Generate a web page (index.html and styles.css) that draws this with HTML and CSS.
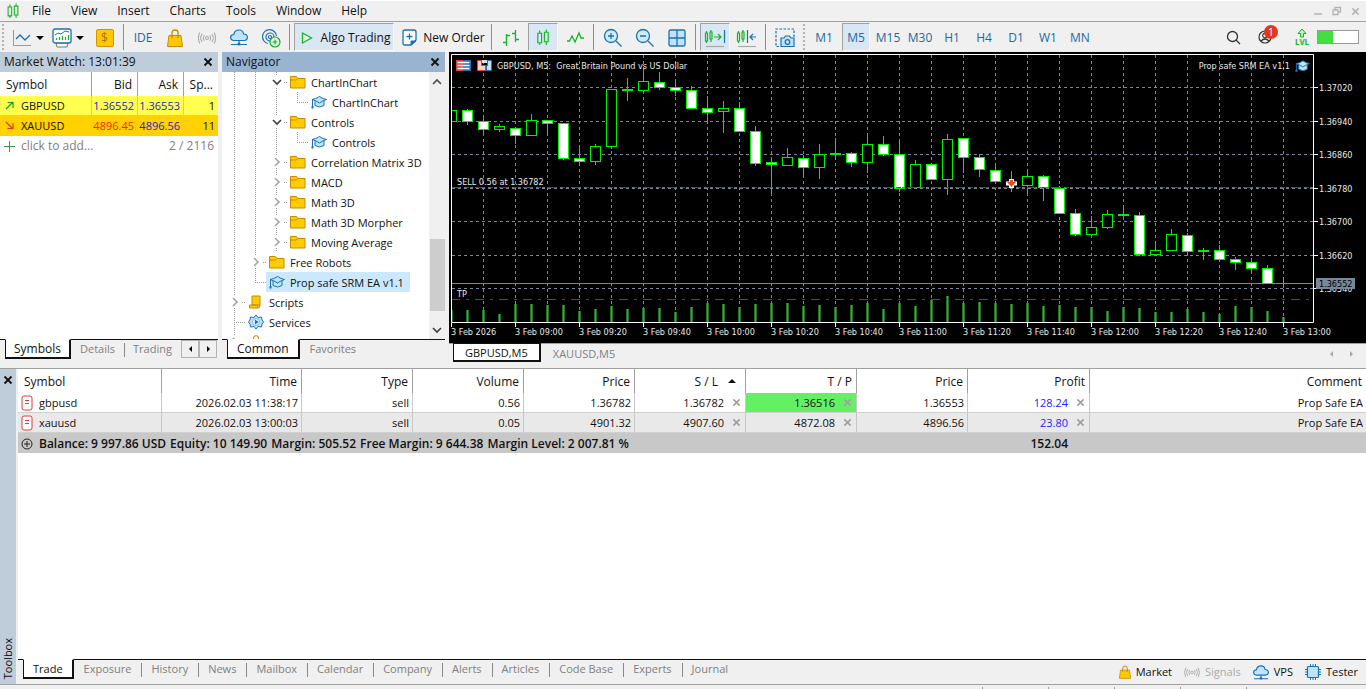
FILE: index.html
```html
<!DOCTYPE html>
<html lang="en">
<head>
<meta charset="utf-8">
<title>Trading Terminal</title>
<link rel="stylesheet" href="styles.css">
</head>
<body>
<svg class="defs" aria-hidden="true">
  <symbol id="i-folder" viewBox="0 0 16 14"><path d="M.5 1.5h6l1.500 2h7v9.500H.5z" fill="#ffcc00" stroke="#c68a00"/><path d="M.5 5h6l1.500-1.500" fill="none" stroke="#c68a00"/></symbol>
  <symbol id="i-cap" viewBox="0 0 16 14"><path d="M4 6v4.500q4.500 3 9 0V6" fill="#bfe3fb" stroke="#1a72b0"/><path d="M1 4.500Q5 4 8.500 1.500 12 4 15.500 4.500 12 5.500 8.500 8 5 5.500 1 4.500z" fill="#bfe3fb" stroke="#1a72b0"/><path d="M1.500 4.500v7" stroke="#1a72b0"/><path d="M.5 11h2v2.500h-2z" fill="#1a72b0"/></symbol>
  <symbol id="i-bag" viewBox="0 0 16 18"><path d="M2 6.500h12l1.500 11H.5z" fill="#ffc800" stroke="#c68a00"/><path d="M5 9V3.500Q5 1 8 1t3 2.500V9" fill="none" stroke="#c68a00" stroke-width="1.300"/></symbol>
  <symbol id="i-signal" viewBox="0 0 20 14"><g fill="none" stroke="currentColor" stroke-width="1.200"><circle cx="10" cy="7" r="1.600"/><path d="M7 4q-2 3 0 6M13 4q2 3 0 6M4.500 2.500q-3 4.500 0 9M15.500 2.500q3 4.500 0 9M2 1q-3 6 0 12M18 1q3 6 0 12"/></g></symbol>
  <symbol id="i-cloud" viewBox="0 0 18 17"><path d="M4 11.500Q.6 11.300.6 8.300.6 5.800 3.800 5.500 4.500 1 9 1q4 0 4.600 4 3.800.2 3.800 3.300 0 3-3.400 3.200z" fill="#bfe3fb" stroke="#1a72b0" stroke-width="1.200"/><path d="M9 11.500V14M1 15.500h16" stroke="#1a72b0" stroke-width="1.200"/><circle cx="9" cy="15" r="1.500" fill="#1a72b0"/></symbol>
  <symbol id="i-candles" viewBox="0 0 14 18"><g fill="none" stroke="currentColor" stroke-width="1.200"><path d="M1.500 4.500h4v10h-4zM3.500 1.500v3M3.500 14.500v2.500M8.500 3.500h4v10h-4zM10.500.5v3M10.500 13.500V17"/></g></symbol>
  <symbol id="i-doc" viewBox="0 0 12 16"><rect x="1" y="1" width="10" height="14" rx="2" fill="#fff" stroke="#e03c3c"/><path d="M4 5.500h4M4 8.500h4" stroke="#e03c3c"/></symbol>
  <symbol id="i-x" viewBox="0 0 10 10"><path d="m1.500 1.500 7 7m0-7-7 7" stroke="currentColor" stroke-width="1.800"/></symbol>
  <symbol id="i-right" viewBox="0 0 10 10"><path d="m3 1 4 4-4 4" fill="none" stroke="#a6a6a6" stroke-width="1.700"/></symbol>
  <symbol id="i-down" viewBox="0 0 10 10"><path d="m1 3 4 4 4-4" fill="none" stroke="#404040" stroke-width="1.700"/></symbol>
</svg>

<nav class="menu" aria-label="Main menu">
  <svg class="app-icon" width="14" height="16"><use href="#i-candles"/></svg>
  <button>File</button><button>View</button><button>Insert</button><button>Charts</button><button>Tools</button><button>Window</button><button>Help</button>
  <div class="window-buttons">
    <button aria-label="Minimize"><svg width="10" height="10"><path d="M1 8h8" stroke="currentColor" stroke-width="1.500"/></svg></button>
    <button aria-label="Restore"><svg width="10" height="10"><path d="M1 4h5v4.500H1zM3 4V1.500h5.500V6H6.500" fill="none" stroke="currentColor" stroke-width="1.300"/></svg></button>
    <button aria-label="Close"><svg width="9" height="9"><use href="#i-x"/></svg></button>
  </div>
</nav>

<header class="toolbar">
  <span class="grip"></span>
  <button class="tool drop" aria-label="Chart type"><svg width="20" height="18" fill="none"><path d="M1.500 1v15.500H19" stroke="#999"/><path d="m4 10 4-4 5 5 5-5" stroke="#1a72b0" stroke-width="1.300"/></svg><i class="caret"></i></button>
  <button class="tool drop" aria-label="Indicators"><svg width="20" height="20" fill="none"><path d="M4 15h12l-1 4H5z" fill="#fff" stroke="#777"/><rect x="1" y="1" width="18" height="14" rx="2" fill="#fff" stroke="#1a72b0" stroke-width="1.300"/><path d="m3 7 3-2 3 1 4-3 4 1" stroke="#1a72b0"/><path d="M4.500 12v-2M7.500 12V9M10.500 12V8M13.500 12V9M16.500 12V7" stroke="#14b428" stroke-width="1.200"/></svg><i class="caret"></i></button>
  <button class="tool coin" aria-label="Quotes"><span>$</span></button>
  <span class="sep"></span>
  <button class="tool blue">IDE</button>
  <button class="tool" aria-label="Market"><svg width="16" height="18"><use href="#i-bag"/></svg></button>
  <button class="tool muted" aria-label="Signals"><svg width="18" height="14"><use href="#i-signal"/></svg></button>
  <button class="tool" aria-label="VPS"><svg width="18" height="17"><use href="#i-cloud"/></svg></button>
  <button class="tool" aria-label="Copy signals"><svg width="20" height="20" fill="none" stroke="#1a72b0" stroke-width="1.200"><circle cx="9" cy="9" r="1.500"/><path d="M9 13a4 4 0 1 1 4-4M7 15.500A7 7 0 1 1 15.500 8"/><circle cx="14" cy="14" r="5" fill="#e6ffe6" stroke="#14a828"/><path d="M11.500 14h5M14 11.500v5" stroke="#14a828"/></svg></button>
  <span class="sep"></span>
  <button class="tool wide on algo"><svg width="12" height="14"><path d="M1.500 2v10l9-5z" fill="#e0f8e0" stroke="#14b428" stroke-width="1.300"/></svg>Algo Trading</button>
  <button class="tool wide order"><svg width="15" height="17"><path d="M3 1h9q2 0 2 2v8l-5 5H3q-2 0-2-2V3q0-2 2-2z" fill="#fff" stroke="#1a72b0" stroke-width="1.300"/><path d="M9 16v-4h5z" fill="#1a72b0" stroke="#1a72b0"/><path d="M4.500 7.500h6M7.500 4.500v6" stroke="#1a72b0" stroke-width="1.300"/></svg>New Order</button>
  <span class="sep"></span>
  <button class="tool green" aria-label="Bar chart"><svg width="18" height="18" fill="none" stroke="currentColor" stroke-width="1.300"><path d="M1 13.500h3M4.500 5v12M4.500 6.500H8M10 4.500h3.500M13.500 1v12M13.500 10.500H17"/></svg></button>
  <button class="tool green on" aria-label="Candlesticks"><svg width="14" height="17"><use href="#i-candles"/></svg></button>
  <button class="tool green" aria-label="Line chart"><svg width="18" height="14" fill="none" stroke="currentColor" stroke-width="1.300"><path d="M1 10h2.500l2.500-5 3 6 4-9 2 5H18"/></svg></button>
  <span class="sep"></span>
  <button class="tool" aria-label="Zoom in"><svg width="20" height="20" fill="none" stroke="#1a72b0" stroke-width="1.300"><circle cx="8" cy="8" r="6.500" fill="#cfeafd"/><path d="m13 13 5.500 5.500M5 8h6M8 5v6"/></svg></button>
  <button class="tool" aria-label="Zoom out"><svg width="20" height="20" fill="none" stroke="#1a72b0" stroke-width="1.300"><circle cx="8" cy="8" r="6.500" fill="#cfeafd"/><path d="m13 13 5.500 5.500M5 8h6"/></svg></button>
  <button class="tool" aria-label="Tile windows"><svg width="18" height="18"><rect x="1" y="1" width="16" height="16" rx="1.500" fill="#bfe3fb" stroke="#1a72b0" stroke-width="1.300"/><path d="M9 1v16M1 9h16" stroke="#1a72b0" stroke-width="1.300"/></svg></button>
  <span class="sep"></span>
  <button class="tool on" aria-label="Auto scroll"><svg width="22" height="20" fill="none" stroke="#14b428" stroke-width="1.200"><path d="M1.500 5h2v8h-2zM2.500 3v2M2.500 13v2M6 4h2v7H6zM7 2v2M7 11v3M10 9h7M14 6l3 3-3 3"/><path d="M20.500 2v13" stroke="#1a72b0"/><path d="M2 18.500h18" stroke="#aaa"/></svg></button>
  <button class="tool" aria-label="Chart shift"><svg width="22" height="20" fill="none" stroke="#14b428" stroke-width="1.200"><path d="M1.500 5h2v8h-2zM2.500 3v2M2.500 13v2M6 4h2v7H6zM7 2v2M7 11v3"/><path d="M11.500 2v13M14 9h6M17 6l-3 3 3 3" stroke="#1a72b0"/><path d="M2 18.500h18" stroke="#aaa"/></svg></button>
  <span class="sep"></span>
  <button class="tool" aria-label="Screenshot"><svg width="20" height="20" fill="none" stroke="#1a72b0" stroke-width="1.200"><path d="M19 9V1H1v17.500h4" stroke-dasharray="2.500 1.500"/><path d="M6 10h3l1.500-2h4L16 10h3v8.500H6z" fill="#bfe3fb"/><circle cx="12.500" cy="14" r="2.300"/></svg></button>
  <span class="grip end"></span>
  <div class="periods" role="group" aria-label="Timeframe">
    <button>M1</button><button class="on">M5</button><button>M15</button><button>M30</button><button>H1</button><button>H4</button><button>D1</button><button>W1</button><button>MN</button>
  </div>
  <div class="toolbar-right">
    <button aria-label="Search"><svg width="15" height="15" fill="none" stroke="#333" stroke-width="1.300"><circle cx="6.500" cy="6.500" r="5"/><path d="m10 10 4 4"/></svg></button>
    <button class="account" aria-label="Notifications"><svg width="16" height="16" fill="none" stroke="#333" stroke-width="1.200"><circle cx="7" cy="8" r="6"/><circle cx="7" cy="6.500" r="2.300"/><path d="M3 12q4-4 8 0"/></svg><span class="badge">1</span></button>
    <span class="level"><svg width="10" height="10"><path d="M3.500 9V5.500H1L5 1l4 4.500H6.500V9z" fill="#b8f5b8" stroke="#14b428"/></svg><b>LVL</b></span>
    <span class="battery"><i></i></span>
  </div>
</header>

<main class="workspace">
  <section class="panel watch">
    <div class="panel-title">Market Watch: 13:01:39<button aria-label="Close Market Watch"><svg width="10" height="10"><use href="#i-x"/></svg></button></div>
    <div class="panel-body">
      <table class="quotes">
        <colgroup><col class="q-symbol"><col class="q-num"><col class="q-num"><col></colgroup>
        <thead><tr><th>Symbol</th><th>Bid</th><th>Ask</th><th>Sp...</th></tr></thead>
        <tbody>
          <tr class="gbp"><td><svg width="9" height="9"><path d="M1 8 8 1M2.500 1.500H8V7" fill="none" stroke="#14a014" stroke-width="1.200"/></svg>GBPUSD</td><td class="up">1.36552</td><td class="up">1.36553</td><td>1</td></tr>
          <tr class="xau"><td><svg width="9" height="9"><path d="m1 1 7 7M2.500 7.500H8V2" fill="none" stroke="#e63c14" stroke-width="1.200"/></svg>XAUUSD</td><td class="down">4896.45</td><td class="up">4896.56</td><td>11</td></tr>
        </tbody>
      </table>
      <div class="add-row"><svg width="11" height="11"><path d="M0 5.500h11M5.500 0v11" stroke="#3c9c4c"/></svg><span>click to add...</span><span>2 / 2116</span></div>
    </div>
    <div class="tabs"><button class="active">Symbols</button><button>Details</button><button class="divided">Trading</button>
      <div class="stepper"><button aria-label="Previous tabs"><i class="tri left"></i></button><button aria-label="Next tabs"><i class="tri right"></i></button></div></div>
  </section>

  <section class="panel navigator">
    <div class="panel-title">Navigator<button aria-label="Close Navigator"><svg width="10" height="10"><use href="#i-x"/></svg></button></div>
    <div class="panel-body nav-body">
      <div class="tree" id="tree"></div>
      <div class="scrollbar"><svg width="10" height="10"><path d="m1 7 4-4 4 4" fill="none" stroke="#505050" stroke-width="1.700"/></svg><span class="thumb"></span><svg width="10" height="10"><use href="#i-down"/></svg></div>
    </div>
    <div class="tabs"><button class="active">Common</button><button>Favorites</button></div>
  </section>

  <section class="chart-area">
    <svg class="chart" id="chart" viewBox="449 52 917 291" role="img" aria-label="GBPUSD M5 candlestick chart"></svg>
    <div class="chart-tabs"><button class="active">GBPUSD,M5</button><button>XAUUSD,M5</button><span class="chart-steps"><i class="tri left"></i><i class="tri right"></i></span></div>
  </section>
</main>

<section class="toolbox">
  <div class="toolbox-side"><button aria-label="Close Toolbox"><svg width="10" height="10"><use href="#i-x"/></svg></button><span>Toolbox</span></div>
  <div class="toolbox-main">
    <div class="toolbox-body">
      <table class="trades">
        <colgroup><col class="c-symbol"><col class="c-time"><col class="c-n"><col class="c-n"><col class="c-n"><col class="c-n"><col class="c-n"><col class="c-n"><col class="c-profit"><col></colgroup>
        <thead><tr><th>Symbol</th><th>Time</th><th>Type</th><th>Volume</th><th>Price</th><th class="sorted">S / L<i></i></th><th>T / P</th><th>Price</th><th>Profit</th><th>Comment</th></tr></thead>
        <tbody>
          <tr><td><svg width="12" height="16"><use href="#i-doc"/></svg>gbpusd</td><td>2026.02.03 11:38:17</td><td>sell</td><td>0.56</td><td>1.36782</td><td>1.36782<button aria-label="Remove stop loss"><svg width="9" height="9"><use href="#i-x"/></svg></button></td><td class="near">1.36516<button aria-label="Remove take profit"><svg width="9" height="9"><use href="#i-x"/></svg></button></td><td>1.36553</td><td class="profit">128.24<button aria-label="Close position"><svg width="9" height="9"><use href="#i-x"/></svg></button></td><td>Prop Safe EA</td></tr>
          <tr class="alt"><td><svg width="12" height="16"><use href="#i-doc"/></svg>xauusd</td><td>2026.02.03 13:00:03</td><td>sell</td><td>0.05</td><td>4901.32</td><td>4907.60<button aria-label="Remove stop loss"><svg width="9" height="9"><use href="#i-x"/></svg></button></td><td>4872.08<button aria-label="Remove take profit"><svg width="9" height="9"><use href="#i-x"/></svg></button></td><td>4896.56</td><td class="profit">23.80<button aria-label="Close position"><svg width="9" height="9"><use href="#i-x"/></svg></button></td><td>Prop Safe EA</td></tr>
        </tbody>
        <tfoot><tr><td colspan="8"><svg width="12" height="12" fill="none" stroke="#222"><circle cx="6" cy="6" r="5"/><path d="M3 6h6M6 3v6"/></svg><span>Balance: 9 997.86 USD</span><span>Equity: 10 149.90</span><span>Margin: 505.52</span><span>Free Margin: 9 644.38</span><span>Margin Level: 2 007.81 %</span></td><td class="sum">152.04</td><td></td></tr></tfoot>
      </table>
    </div>
    <div class="tabs bottom-tabs">
      <button class="active">Trade</button><button>Exposure</button><button class="divided">History</button><button class="divided">News</button><button class="divided">Mailbox</button><button class="divided">Calendar</button><button class="divided">Company</button><button class="divided">Alerts</button><button class="divided">Articles</button><button class="divided">Code Base</button><button class="divided">Experts</button><button class="divided">Journal</button>
      <div class="services">
        <button><svg width="12" height="14"><use href="#i-bag"/></svg>Market</button>
        <button class="muted"><svg width="16" height="11"><use href="#i-signal"/></svg>Signals</button>
        <button><svg width="16" height="15"><use href="#i-cloud"/></svg>VPS</button>
        <button><svg width="16" height="16" stroke="#1a72b0"><path d="M5.500 0v16M8 0v16M10.500 0v16M0 5.500h16M0 8h16M0 10.500h16"/><rect x="2.500" y="2.500" width="11" height="11" rx="1" fill="#bfe3fb" stroke-width="1.200"/></svg>Tester</button>
      </div>
    </div>
  </div>
</section>
<footer class="status"><span></span><span></span><span></span><span></span><span></span></footer>
<script src="app.js"></script>
</body>
</html>
```
FILE: styles.css
```css
* { box-sizing: border-box; }
body {
  margin: 0;
  height: 100vh;
  display: flex;
  flex-direction: column;
  overflow: hidden;
  background: #f0f0f0;
  color: #111;
  font: 12px/20px "Open Sans", "Noto Sans", sans-serif;
}
button { margin: 0; padding: 0; border: 0; background: none; color: inherit; font: inherit; }
svg { display: block; flex: none; }
.defs { position: absolute; width: 0; height: 0; }

.menu { display: flex; align-items: center; height: 22px; padding-left: 6px; border-top: 1px solid #fff; border-bottom: 1px solid #a0a0a0; }
.menu > button { padding: 0 10px; }
.app-icon { color: #14b428; margin-right: 2px; }
.window-buttons { display: flex; gap: 9px; margin-left: auto; padding-right: 6px; color: #b4b4b4; }

.toolbar { display: flex; align-items: center; height: 30px; }
.grip { width: 8px; height: 26px; background: repeating-linear-gradient(#b4b4b4 0 2px, transparent 2px 4px) 2px 0 / 2px 100% no-repeat; }
.grip.end { width: 7px; }
.sep { width: 6px; height: 26px; background: linear-gradient(#8c8c8c, #8c8c8c) 2px 0 / 1px 100% no-repeat; }
.tool { display: flex; align-items: center; justify-content: center; width: 32px; height: 28px; padding-top: 1px; }
.tool.drop { width: 40px; gap: 4px; }
.caret { border: 4px solid transparent; border-top-color: #000; border-bottom: 0; }
.tool.coin { width: 33px; }
.coin span { width: 18px; height: 18px; line-height: 16px; border: 1px solid #d29600; border-radius: 2px; background: #ffc800; color: #a87400; }
.blue, .periods { color: #1a6aa5; }
.green { color: #14b428; }
.muted { color: #aaa; }
.tool.on, .periods .on { background: #d9e6f3; border: 1px solid #a0a0a0; border-right-color: #f8f8f8; border-bottom-color: #f8f8f8; }
.tool.on { width: 30px; margin: 0 1px; }
.tool.wide { width: auto; gap: 8px; }
.tool.algo { width: 100px; margin: 0 0 0 1px; padding: 2px 0 0 3px; }
.tool.order { width: 95px; gap: 6px; padding-left: 4px; }
.periods { display: flex; }
.periods button { width: 32px; height: 28px; padding-top: 1px; }
.periods .on { width: 28px; margin: 0 2px; }
.toolbar-right { display: flex; align-items: center; margin-left: auto; padding-right: 7px; }
.toolbar-right button { width: 31px; }
.account { position: relative; }
.account svg { margin-left: 1px; }
.badge { position: absolute; left: 7px; top: -4px; width: 14px; height: 14px; border-radius: 7px; background: #e03820; color: #fff; font-size: 11px; line-height: 14px; text-align: center; }
.level { display: flex; flex-direction: column; align-items: center; width: 28px; margin-right: 1px; color: #14b428; font-size: 8px; line-height: 8px; }
.battery { width: 42px; height: 14px; border: 1px solid #999; background: #fff; }
.battery i { display: block; width: 15px; height: 100%; background: #40e040; }

.workspace { display: flex; gap: 4px; height: 316px; }
.panel { display: flex; flex-direction: column; height: 308px; }
.watch { width: 218px; }
.navigator { width: 223px; }
.panel-title { display: flex; justify-content: space-between; align-items: center; height: 20px; padding: 0 5px 0 4px; background: #bfcddb; }
.navigator .panel-title { background: #99b4d1; }
.panel-body { flex: 1; min-height: 0; background: #fff; overflow: hidden; }
table { border-collapse: separate; border-spacing: 0; table-layout: fixed; width: 100%; }
th { font-weight: 400; }
td { font-size: 11px; }
th, td { padding: 0; white-space: nowrap; overflow: hidden; }

.quotes col.q-symbol { width: 92px; }
.quotes col.q-num { width: 46px; }
.quotes th, .quotes td { height: 20px; padding-right: 3px; text-align: right; line-height: 19px; border-right: 1px solid #c8c8c8; border-bottom: 1px solid #c8c8c8; }
.quotes th { height: 24px; padding-right: 5px; border-right-color: #a0a0a0; border-bottom: 0; }
.quotes th:last-child, .quotes td:last-child { border-right: 0; }
.quotes th:first-child { text-align: left; padding-left: 6px; }
.quotes td:first-child { text-align: left; padding-left: 5px; }
.quotes td svg { display: inline-block; margin-right: 7px; }
.gbp { background: #ffff50; }
.xau { background: #ffd200; }
.up { color: #1c1ccc; }
.down { color: #ff1e00; }
.add-row { display: flex; align-items: center; gap: 6px; height: 20px; padding: 0 4px; color: #808080; }
.add-row span:last-child { margin-left: auto; }

.tabs { display: flex; height: 21px; border-top: 1px solid #111; color: #808080; padding-left: 5px; font-size: 11px; }
.tabs > button { display: flex; justify-content: center; height: 18px; line-height: 18px; padding: 0 10px; }
.tabs > .active { height: 20px; margin-top: -1px; border: 1px solid #111; border-top-color: #fff; border-bottom-width: 2px; border-right-width: 2px; background: #fff; color: #111; padding: 0 9px; font-size: 12px; }
.tabs > .divided { position: relative; }
.tabs > .divided::before { content: ""; position: absolute; left: 0; top: 3px; width: 1px; height: 14px; background: #888; }
.watch .tabs > button { padding: 0 9px; }
.watch .tabs > .active { padding: 0 8px; }
.stepper { display: flex; margin-left: auto; margin-right: 1px; }
.stepper button { display: flex; align-items: center; justify-content: center; width: 18px; height: 18px; border: 1px solid #b4b4b4; }
.tri { border: 3px solid transparent; }
.tri.left { border-left: 0; border-right-color: #000; }
.tri.right { border-right: 0; border-left-color: #000; }

.nav-body { display: flex; }
.tree { flex: 1; padding-left: 2px; overflow: hidden; font-size: 11px; line-height: 19px; }
.node { display: flex; height: 20px; }
.cell { width: 21px; flex: none; display: flex; align-items: center; justify-content: center; background-repeat: no-repeat; }
.cell.v { background: repeating-linear-gradient(#999 0 1px, transparent 1px 2px) 10px 0 / 1px 20px no-repeat; }
.cell.l { background: repeating-linear-gradient(#999 0 1px, transparent 1px 2px) 10px 0 / 1px 10px no-repeat, repeating-linear-gradient(90deg, #999 0 1px, transparent 1px 2px) 10px 10px / 11px 1px no-repeat; }
.cell.t { background: repeating-linear-gradient(#999 0 1px, transparent 1px 2px) 10px 0 / 1px 20px no-repeat, repeating-linear-gradient(90deg, #999 0 1px, transparent 1px 2px) 10px 10px / 11px 1px no-repeat; }
.cell.e { background: repeating-linear-gradient(#999 0 1px, transparent 1px 2px) 10px 0 / 1px 4px no-repeat, repeating-linear-gradient(#999 0 1px, transparent 1px 2px) 10px 16px / 1px 4px no-repeat, repeating-linear-gradient(90deg, #999 0 1px, transparent 1px 2px) 18px 10px / 3px 1px no-repeat; }
.label { display: flex; align-items: center; gap: 5px; padding: 0 6px 0 3px; white-space: nowrap; }
.label.selected { background: #cce8ff; }
.scrollbar { display: flex; flex-direction: column; align-items: center; width: 16px; padding: 5px 0 4px; background: #f0f0f0; }
.thumb { width: 15px; height: 72px; margin: auto 0 14px; background: #cdcdcd; }

.chart-area { flex: 1; min-width: 0; display: flex; flex-direction: column; background: #f0f0f0; }
.chart { width: 100%; height: auto; background: #000; font: 9px "DejaVu Sans Condensed", "DejaVu Sans", sans-serif; }
.chart-tabs { display: flex; height: 20px; padding-left: 4px; border-top: 1px solid #a0a0a0; color: #808080; font-size: 11px; }
.chart-tabs button { padding: 0 12px; line-height: 19px; }
.chart-tabs .active { height: 19px; margin-top: -1px; padding: 0 11px; background: #fff; color: #111; border: 1px solid #111; border-bottom-width: 2px; border-right-width: 2px; line-height: 17px; }
.chart-steps { display: flex; align-items: center; gap: 17px; margin-left: auto; padding-right: 13px; opacity: .3; }

.toolbox { flex: 1; min-height: 0; display: flex; gap: 2px; border-top: 1px solid #a0a0a0; }
.toolbox-side { display: flex; flex-direction: column; align-items: center; justify-content: space-between; width: 16px; padding: 6px 0 5px; background: #bfcddb; }
.toolbox-side span { writing-mode: vertical-rl; transform: rotate(180deg); line-height: 16px; font-size: 11px; }
.toolbox-main { flex: 1; min-width: 0; display: flex; flex-direction: column; }
.toolbox-body { flex: 1; min-height: 0; background: #fff; }
.c-symbol { width: 144px; }
.c-time { width: 140px; }
.c-n { width: 111px; }
.c-profit { width: 122px; }
.trades th, .trades td { height: 20px; line-height: 19px; padding-right: 3px; text-align: right; border-right: 1px solid #c8c8c8; border-bottom: 1px solid #d0d0d0; }
.trades th { height: 24px; padding-right: 4px; border-right-color: #a0a0a0; border-bottom: 0; }
.trades th:last-child, .trades td:last-child { border-right: 0; }
.trades th:first-child { text-align: left; padding-left: 6px; }
.trades td:first-child { text-align: left; padding-left: 3px; }
.trades td svg { display: inline-block; vertical-align: top; }
.trades td:first-child svg { margin: 2px 6px 0 0; }
.trades td button { margin-left: 8px; padding: 5px 1px 0 0; color: #a0a0a0; line-height: 10px; vertical-align: top; }
.sorted i { display: inline-block; margin: 0 5px 3px 10px; border: 4px solid transparent; border-bottom-color: #111; border-top: 0; }
.alt { background: #e9e9e9; }
.trades .near { background: #64f064; }
.trades .profit { color: #1e1eff; }
.trades tfoot td { border: 0; background: #c8c8c8; font-size: 12px; font-weight: 600; line-height: 19px; }
.trades tfoot td:first-child svg { margin-top: 4px; }
.trades tfoot span { margin-right: 4px; }
.trades tfoot .sum { padding-right: 22px; }

.bottom-tabs { height: 25px; }
.bottom-tabs > .active { font-size: 11px; }
.services { display: flex; align-items: center; gap: 12px; margin-left: auto; padding-right: 8px; color: #111; }
.services button { display: flex; align-items: center; gap: 5px; }
.services .muted { color: #aaa; }
.status { display: flex; justify-content: flex-end; height: 5px; border-top: 1px solid #a0a0a0; padding-right: 54px; }
.status span { width: 66px; margin-top: 2px; border-left: 1px solid #a0a0a0; }
```
FILE: app.js
```js
// Navigator tree: [cells, icon, label, selected]
const nodes = [
  ["vvo", "folder", "ChartInChart"],
  ["vvvl", "cap", "ChartInChart"],
  ["vvo", "folder", "Controls"],
  ["vvvl", "cap", "Controls"],
  ["vve", "folder", "Correlation Matrix 3D"],
  ["vve", "folder", "MACD"],
  ["vve", "folder", "Math 3D"],
  ["vve", "folder", "Math 3D Morpher"],
  ["vve", "folder", "Moving Average"],
  ["ve", "folder", "Free Robots"],
  ["vl", "cap", "Prop safe SRM EA v1.1", true],
  ["e", "script", "Scripts"],
  ["t", "gear", "Services"],
  ["e", "bag", "Market"]
];
const icons = {
  folder: '<svg width="16" height="14"><use href="#i-folder"/></svg>',
  cap: '<svg width="16" height="14"><use href="#i-cap"/></svg>',
  bag: '<svg width="16" height="14"><use href="#i-bag"/></svg>',
  script: '<svg width="16" height="14"><path d="M4 1h8v9H4zM1.500 10H10v3H1.500zM10 13q2 0 2-3" fill="#ffcc00" stroke="#c68a00"/></svg>',
  gear: '<svg width="16" height="16"><path d="m8 1 2 2.500 3.500-.5.500 3 1.500 2-1.500 2-.5 3-3.500-.5L8 15l-2-2.500-3.500.5L2 10 .5 8 2 6l.5-3 3.500.5z" fill="#bfe3fb" stroke="#1a72b0"/><circle cx="8" cy="8" r="3.500" fill="#e4f4ff" stroke="#7ab8e0"/><path d="m7 5.500 3.500 2.500L7 10.500z" fill="#1a72b0"/></svg>'
};
document.getElementById("tree").innerHTML = nodes.map(([cells, icon, label, selected]) =>
  '<div class="node">' + [...cells].map(c =>
    c === "o" ? '<span class="cell e"><svg width="10" height="10"><use href="#i-down"/></svg></span>'
    : c === "e" ? '<span class="cell e"><svg width="10" height="10"><use href="#i-right"/></svg></span>'
    : `<span class="cell ${c}"></span>`).join("") +
  `<span class="label${selected ? " selected" : ""}">${icons[icon]}${label}</span></div>`).join("");

// Candles, one per 16 units: high, body top, body bottom, low, kind (1 bearish, 0 bullish)
const candles = [
  [110,110,121,121,0],[109,110,121,124,1],[115,121,129,132,1],[124,126,129,131,0],[127,128,135,143,1],
  [114,120,135,135,0],[120,120,123,134,1],[123,123,158,159,1],[148,158,161,165,1],[144,146,161,164,0],
  [89,89,146,148,0],[78,89,90,100,0],[69,81,90,90,0],[72,82,87,89,1],[82,87,90,95,1],[86,90,108,108,1],
  [96,108,112,121,1],[101,108,111,132,0],[102,108,131,131,1],[126,131,163,165,1],[158,162,164,193,1],
  [148,157,165,165,0],[155,158,167,176,1],[144,154,167,178,0],[138,153,154,159,0],[152,153,162,166,1],
  [135,144,162,172,0],[136,144,154,155,1],[141,154,188,191,1],[160,164,187,187,0],[163,164,179,179,1],
  [134,139,179,194,0],[138,138,157,172,1],[154,157,169,176,1],[166,170,181,182,1],[171,181,185,191,1],
  [171,176,185,195,0],[175,176,187,200,1],[186,188,213,213,1],[209,213,234,235,1],[216,227,234,234,0],
  [210,214,227,228,0],[207,214,215,216,0],[212,215,254,255,1],[241,250,254,254,0],[229,234,250,250,0],
  [233,235,251,254,1],[248,250,251,259,0],[245,250,259,260,1],[257,259,262,269,1],[258,262,268,271,1],
  [265,268,283,283,1],[277,283,283,287,0]
];
const volumeTops = [310,310,310,314,304,304,305,305,311,309,306,309,308,308,312,307,303,304,307,304,303,303,306,305,307,305,303,309,303,306,300,296,303,302,303,304,303,306,305,307,307,311,307,308,312,312,309,312,314,306,307,311,317];
const times = ["3 Feb 2026","3 Feb 09:00","3 Feb 09:20","3 Feb 09:40","3 Feb 10:00","3 Feb 10:20","3 Feb 10:40","3 Feb 11:00","3 Feb 11:20","3 Feb 11:40","3 Feb 12:00","3 Feb 12:20","3 Feb 12:40","3 Feb 13:00"];
const prices = [[87,"1.37020"],[121,"1.36940"],[154,"1.36860"],[188,"1.36780"],[221,"1.36700"],[255,"1.36620"],[288,"1.36540"]];
const line = (x1, y1, x2, y2, color, dash = "") =>
  `<path d="M${x1} ${y1}L${x2} ${y2}" stroke="${color}"${dash ? ` stroke-dasharray="${dash}"` : ""}/>`;
const text = (x, y, s, fill = "#e8e8e8", extra = "") => `<text x="${x}" y="${y}" fill="${fill}" ${extra}>${s}</text>`;
const grid = "#778899";
let out = '<g fill="none">';
for (let x = 483; x < 1300; x += 32) out += line(x + .5, 55, x + .5, 322, grid, "3 3");
for (const [y] of prices) out += line(452, y + .5, 1313, y + .5, grid, "3 3");
volumeTops.forEach((top, i) => {
  const x = 451 + i * 16;
  out += `<path d="M${x + .5} ${top}V322" stroke="#1f701f" stroke-width="3"/>` + line(x + .5, top, x + .5, 322, "#32b432");
});
out += line(452, 283.5, 1313, 283.5, grid);
candles.forEach(([high, top, bottom, low, bear], i) => {
  const x = 451.5 + i * 16;
  out += line(x, high, x, top, "#00f000") + line(x, bottom, x, low + 1, "#00f000");
  out += bottom - top < 2
    ? `<rect x="${x - 5.5}" y="${top}" width="11" height="${bottom - top + 1}" fill="#00f000"/>`
    : `<rect x="${x - 5}" y="${top + .5}" width="10" height="${bottom - top}" fill="${bear ? "#fff" : "#000"}" stroke="#00f000"/>`;
});
out += line(452, 187.5, 1313, 187.5, "#30a030", "3 3");
out += line(451, 187.5, 1313, 187.5, "#e01010", "9 6 3 6");
out += line(451, 299.5, 1313, 299.5, "#e01010", "9 6 3 6");
out += '<path d="M1009 179h5v3h3v3h-3v3h-5v-3h-3v-3h3z" fill="#fff"/><path d="M1010 180h3v2h3l-4.500 5-4.500-5h3z" fill="#f04a20"/>';
out += '<path d="M449 55h2.500v268H449z" fill="#000"/><path d="M451.500 54.500h862v268h-862z" stroke="#fff"/></g>';
times.forEach((t, i) => { out += line(451.5 + i * 64, 323, 451.5 + i * 64, 327, "#fff") + text(451 + i * 64, 335, t); });
for (const [y, p] of prices) out += line(1314, y + .5, 1318, y + .5, "#fff") + text(1319, y + 4, p);
out += '<path d="M1316 278h39v11h-39z" fill="#778899"/>' + text(1319, 287, "1.36552", "#000");
out += text(497, 69, "GBPUSD, M5:&#160; Great Britain Pound vs US Dollar") + text(1290, 69, "Prop safe SRM EA v1.1", "#e8e8e8", 'text-anchor="end"');
out += text(457, 185, "SELL 0.56 at 1.36782") + text(457, 297, "TP");
out += '<path d="M456 60h7v11h-7z" fill="#e04040"/><path d="M463 60h8v11h-8z" fill="#2070b8"/><path d="M457.500 62.500h12M457.500 65.500h12M457.500 68.500h12" stroke="#fff" stroke-width="1.500"/>';
out += '<path d="M477.500 60.500h4v5h4v5h-8z" fill="#ffd0c8" stroke="#e04040"/><path d="M487.500 60.500h4v10h-5v-5h1z" fill="#bfe3fb" stroke="#2070b8"/><path d="M482 60h5v3h-5z" fill="#ddd"/>';
out += '<svg x="1295" y="59" width="15" height="14"><use href="#i-cap"/></svg>';
document.getElementById("chart").innerHTML = out;
```
